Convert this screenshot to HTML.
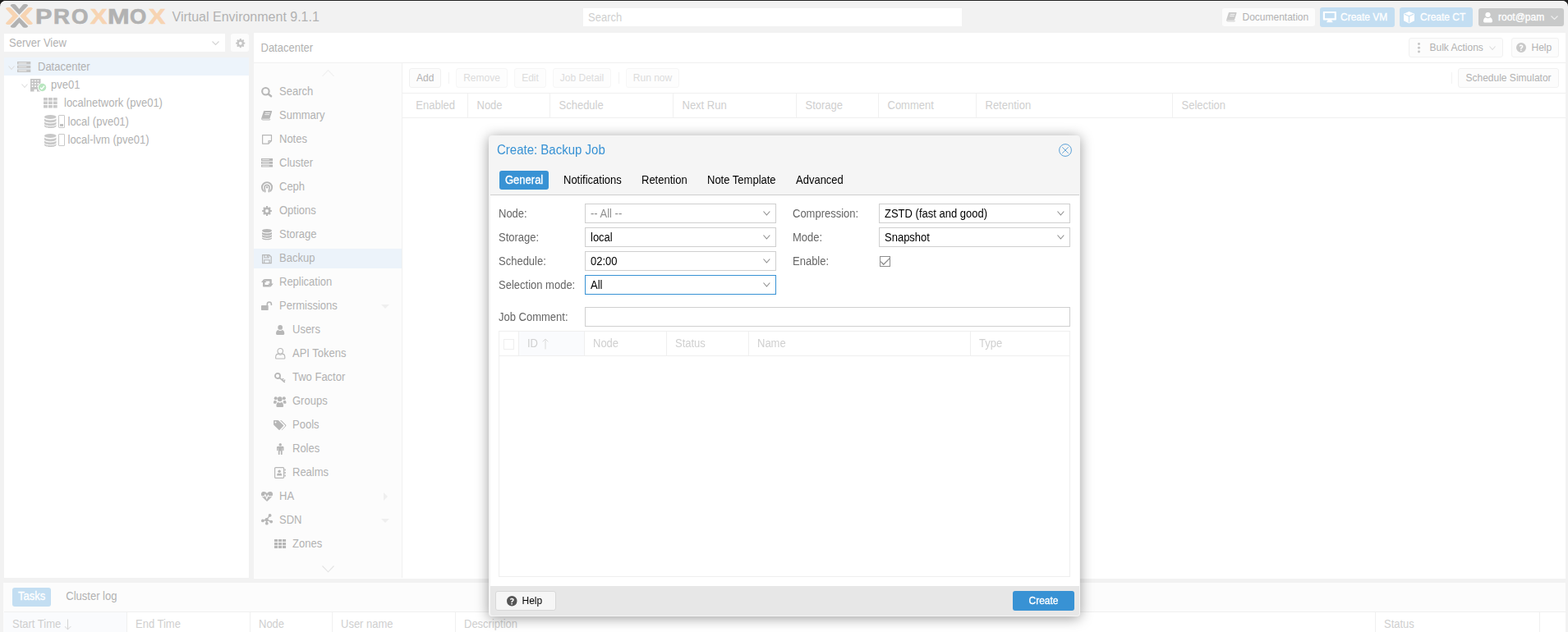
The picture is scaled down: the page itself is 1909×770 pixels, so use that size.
<!DOCTYPE html>
<html lang="en"><head><meta charset="utf-8"><title>pve01 - Proxmox Virtual Environment</title>
<style>
html,body{margin:0;padding:0}
body{width:1909px;height:770px;overflow:hidden;background:#1f1f1f;position:relative;
 font-family:"Liberation Sans",Arial,Helvetica,sans-serif;font-size:13px;line-height:17px;color:#000}
#app{position:absolute;left:0;top:1px;width:1909px;height:769px;background:#f2f2f2;border-radius:7px 7px 0 0;overflow:hidden;box-shadow:inset 0 1px 0 #fff}
#pg{position:absolute;left:0;top:-1px;width:1909px;height:770px}
.b{position:absolute;box-sizing:border-box}
.t{position:absolute;white-space:nowrap;line-height:17px;transform:scaleY(1.065);transform-origin:0 75%}
.ic{position:absolute;display:block;overflow:visible}
.m{color:#b2b2b2}
.h{color:#cfcfcf}
.d{color:#dcdcdc}
.btn{background:#fcfcfc;border:1px solid #f1f1f1;border-radius:3px}
.btnd{background:#fdfdfd;border:1px solid #f6f6f6;border-radius:3px}
.fld{background:#fff;border:1px solid #cfcfcf}
.lbl{color:#666}
.s{font-size:12px}
.w{-webkit-text-stroke:.3px #fff}
</style></head><body><div id="app"><div id="pg">
<svg class="ic" style="left:6px;top:4px;width:36px;height:32px" viewBox="6 4 36 32"><path d="M12.600 6.700Q13.200 5 15 5L17 5Q18.300 5 19.200 6L23.400 11.100L27.600 6Q28.500 5 29.800 5L31.800 5Q33.600 5 34.200 6.700L23.400 17.900Z" fill="#b2b2b2"/><path d="M12.600 32.100Q13.200 33.800 15 33.800L17 33.800Q18.300 33.800 19.200 32.800L23.400 27.700L27.600 32.800Q28.500 33.800 29.800 33.800L31.800 33.800Q33.600 33.800 34.200 32.100L23.400 20.900Z" fill="#b2b2b2"/><path d="M6.900 10.600Q7.200 8.900 9.200 8.900L11.200 8.900Q12.500 8.900 13.500 9.900L22.500 19.400L13.500 28.900Q12.500 29.900 11.200 29.900L9.200 29.900Q7.200 29.900 6.900 28.200L15.200 19.400Z" fill="#f7d4b2"/><path d="M39.900 10.600Q39.600 8.900 37.600 8.900L35.600 8.900Q34.300 8.900 33.300 9.900L24.300 19.400L33.300 28.900Q34.300 29.900 35.600 29.900L37.600 29.900Q39.600 29.900 39.900 28.200L31.600 19.400Z" fill="#f7d4b2"/></svg>
<div class="b" id="wm" style="left:0;top:6.800px;width:260px;height:27px;white-space:nowrap;font-weight:bold;font-size:26.500px;line-height:26.500px;-webkit-text-stroke:.7px currentColor"><span style="display:inline-block;margin-left:43.42px;transform-origin:0 0;transform:scaleX(1.152);color:#b2b2b2">P</span><span style="display:inline-block;margin-left:3.89px;transform-origin:0 0;transform:scaleX(1.045);color:#b2b2b2">R</span><span style="display:inline-block;margin-left:3.07px;transform-origin:0 0;transform:scaleX(0.992);color:#b2b2b2">O</span><span style="display:inline-block;margin-left:1.84px;transform-origin:0 0;transform:scaleX(1.149);color:#f7d4b2">X</span><span style="display:inline-block;margin-left:3.91px;transform-origin:0 0;transform:scaleX(1.206);color:#b2b2b2">M</span><span style="display:inline-block;margin-left:4.90px;transform-origin:0 0;transform:scaleX(0.981);color:#b2b2b2">O</span><span style="display:inline-block;margin-left:1.73px;transform-origin:0 0;transform:scaleX(1.149);color:#f7d4b2">X</span></div>
<div class="t m" style="left:209.5px;top:11px;font-size:16px;line-height:20px">Virtual Environment 9.1.1</div>
<div class="b " style="left:710px;top:10px;width:461px;height:22px;background:#fff"></div>
<div class="t " style="left:716px;top:12.5px;color:#cfcfcf">Search</div>
<div class="b " style="left:1488px;top:10px;width:113px;height:22px;background:#fcfcfc;border-radius:3px"></div>
<svg class="ic" style="left:1492.70px;top:15.20px;width:12.6px;height:11.4px;color:#cbcbcb" viewBox="0 0 13.2 11.5" preserveAspectRatio="none" fill="currentColor"><path d="M3.600 0H12.500Q13.500 0 13.100 1L10.500 9.200Q10.300 9.800 9.500 9.800H1.400Q0 9.800 .4 8.400L3 .6Q3.200 0 3.600 0Z"/><path d="M5 2.500H10.800M4.300 4.600H10.100" stroke="#fff" stroke-opacity=".8" stroke-width="1" fill="none"/><path d="M.4 9.300Q.3 11 2 11H10.600L10.900 10.200" stroke="currentColor" stroke-width="1" fill="none"/></svg>
<div class="t m s" style="left:1512.5px;top:12.5px;">Documentation</div>
<div class="b " style="left:1607px;top:9px;width:91px;height:24px;background:#c3def2;border-radius:3px"></div>
<svg class="ic" style="left:1611.30px;top:13.80px;width:15.7px;height:13.2px;color:#fff" viewBox="0 0 14.6 12.3" preserveAspectRatio="none" fill="currentColor"><path transform="translate(-.7 -1.800)" d="M1.200 1.800h13.600c.4 0 .7.300.7.700v8.300c0 .4-.3.700-.7.700h-4.600l.5 1.600h.6v1h-6.600v-1h.6l.5-1.600h-4.600c-.4 0-.7-.3-.7-.7v-8.300c0-.4.300-.7.700-.700zM2.500 3.600v6h11v-6z" fill-rule="evenodd"/></svg>
<div class="t s w" style="left:1632px;top:12.5px;color:#fff">Create VM</div>
<div class="b " style="left:1704px;top:9px;width:89px;height:24px;background:#c3def2;border-radius:3px"></div>
<svg class="ic" style="left:1709.00px;top:14.00px;width:13px;height:14.4px;color:#fff" viewBox="0 0 13 14.4" preserveAspectRatio="none" fill="currentColor"><path d="M6.500 0L13 2.700V11.300L6.500 14.400L0 11.300V2.700Z"/><path d="M1 3.300L6.500 5.700L12 3.300M6.500 5.700V13.600" fill="none" stroke="#c3def2" stroke-width="1.200"/></svg>
<div class="t s w" style="left:1729px;top:12.5px;color:#fff">Create CT</div>
<div class="b " style="left:1800px;top:10px;width:104px;height:22px;background:#c8c9c9;border-radius:3px"></div>
<svg class="ic" style="left:1805.50px;top:14.50px;width:11px;height:12.5px;color:#fff" viewBox="0 0 10.3 12" preserveAspectRatio="none" fill="currentColor"><circle cx="5.150" cy="2.900" r="2.900"/><path d="M1.300 12Q0 12 0 10.600C0 8 .9 6.200 2.600 6C3.300 6.700 4.200 7 5.150 7C6.100 7 7 6.700 7.700 6C9.400 6.200 10.300 8 10.300 10.600Q10.300 12 9 12Z"/></svg>
<div class="t s w" style="left:1824px;top:12.5px;color:#fff">root@pam</div>
<svg class="ic" style="left:1888px;top:19px;width:9px;height:5px" viewBox="0 0 9 5"><path d="M0.500 0.500L4.5 4.5L8.5 0.500" fill="none" stroke="#eee" stroke-width="1.2"/></svg>
<div class="b " style="left:5px;top:41px;width:269px;height:22px;background:#fff"></div>
<div class="t m" style="left:11px;top:43.5px;">Server View</div>
<svg class="ic" style="left:258px;top:50px;width:9px;height:5px" viewBox="0 0 9 5"><path d="M0.500 0.500L4.5 4.5L8.5 0.500" fill="none" stroke="#d4d4d4" stroke-width="1.1"/></svg>
<div class="b " style="left:281px;top:41px;width:22px;height:22px;background:#fcfcfc;border-radius:3px"></div>
<svg class="ic" style="left:286.50px;top:46.50px;width:11.5px;height:11.5px;color:#c6c6c6" viewBox="0 0 13.4 13.4" preserveAspectRatio="none" fill="currentColor"><path transform="translate(-1.300 -1.300)" d="M8 1.300l1 .1.400 1.700 1 .4 1.500-.9 1.400 1.400-.9 1.500.4 1 1.700.4v2l-1.700.4-.4 1 .9 1.500-1.400 1.400-1.500-.9-1 .4-.4 1.700h-2l-.4-1.700-1-.4-1.500.9-1.400-1.400.9-1.500-.4-1-1.700-.4v-2l1.700-.4.4-1-.9-1.500 1.400-1.400 1.500.9 1-.4.400-1.700zM8 5.800a2.200 2.200 0 100 4.400 2.200 2.200 0 000-4.400z" fill-rule="evenodd"/></svg>
<div class="b " style="left:5px;top:70px;width:298px;height:634px;background:#fff"></div>
<div class="b " style="left:5px;top:70px;width:298px;height:22px;background:#edf4fb"></div>
<div class="t m" style="left:46px;top:72.5px;">Datacenter</div>
<div class="t m" style="left:62px;top:94.75px;">pve01</div>
<div class="t m" style="left:78px;top:116.5px;">localnetwork (pve01)</div>
<div class="t m" style="left:82.5px;top:139.5px;">local (pve01)</div>
<div class="t m" style="left:82.5px;top:162px;">local-lvm (pve01)</div>
<svg class="ic" style="left:10px;top:79.5px;width:8px;height:5px" viewBox="0 0 8 5"><path d="M0.500 0.500L4.0 4.5L7.5 0.500" fill="none" stroke="#dedede" stroke-width="1.1"/></svg>
<svg class="ic" style="left:26px;top:101.5px;width:8px;height:5px" viewBox="0 0 8 5"><path d="M0.500 0.500L4.0 4.5L7.5 0.500" fill="none" stroke="#dedede" stroke-width="1.1"/></svg>
<svg class="ic" style="left:20.60px;top:75.00px;width:16.3px;height:13px;color:#c4c4c4" viewBox="0 0 14.1 10.6" preserveAspectRatio="none" fill="currentColor"><path d="M0 0H14.100V2.900H0ZM0 3.850H14.100V6.750H0ZM0 7.700H14.100V10.600H0Z"/><path d="M1.200 1.450H9.800M1.200 5.300H9.800M1.200 9.150H9.800" stroke="#fff" stroke-opacity=".7" stroke-width="1" fill="none"/></svg>
<svg class="ic" style="left:36.90px;top:96.00px;width:12.5px;height:15.6px;color:#c4c4c4" viewBox="0 0 11 14" preserveAspectRatio="none" fill="currentColor"><path transform="translate(-2 -1)" d="M2 1h11v14h-4v-2.500h-3v2.500h-4zM3.500 2.500v1.500h1.500v-1.500zM6.500 2.500v1.500h1.500v-1.500zM9.500 2.500v1.500h1.500v-1.500zM3.500 5.500v1.500h1.500v-1.500zM6.500 5.500v1.500h1.500v-1.500zM9.500 5.500v1.500h1.500v-1.500zM3.500 8.500v1.500h1.500v-1.500zM6.500 8.500v1.500h1.500v-1.500zM9.500 8.500v1.500h1.500v-1.500z" fill-rule="evenodd"/></svg>
<svg class="ic" style="left:46px;top:101px;width:11px;height:11px" viewBox="0 0 11 11"><circle cx="5.500" cy="5.500" r="5.500" fill="#fff"/><circle cx="5.500" cy="5.500" r="4.700" fill="#b9e6c0"/><path d="M3 5.700l1.800 1.700 3.200-3.600" stroke="#fff" stroke-width="1.400" fill="none"/></svg>
<svg class="ic" style="left:52.50px;top:119.40px;width:16.7px;height:12.5px;color:#c8c8c8" viewBox="0 0 14.1 10.9" preserveAspectRatio="none" fill="currentColor"><path d="M0 0H4.100V3.100H0ZM5 0H9.100V3.100H5ZM10 0H14.100V3.100H10ZM0 3.900H4.100V7H0ZM5 3.900H9.100V7H5ZM10 3.900H14.100V7H10ZM0 7.800H4.100V10.900H0ZM5 7.800H9.100V10.900H5ZM10 7.800H14.100V10.900H10Z"/></svg>
<svg class="ic" style="left:53.60px;top:140.00px;width:14.5px;height:16px;color:#c8c8c8" viewBox="0 0 12 14.4" preserveAspectRatio="none" fill="currentColor"><g transform="translate(-2 -1.300)"><ellipse cx="8" cy="3.600" rx="6" ry="2.300"/><path d="M2 5.400c.7 1.100 3 1.800 6 1.800s5.300-.7 6-1.800v2c0 1.300-2.700 2.300-6 2.300s-6-1-6-2.300zM2 8.900c.7 1.100 3 1.800 6 1.800s5.300-.7 6-1.800v2c0 1.300-2.700 2.300-6 2.300s-6-1-6-2.300zM2 12.400c.7 1.100 3 1.800 6 1.800s5.300-.7 6-1.800v1c0 1.300-2.700 2.300-6 2.300s-6-1-6-2.300z"/></g></svg>
<div class="b " style="left:71.2px;top:140px;width:8px;height:15.6px;border:1px solid #c9c9c9;border-radius:1px;background:#fff"></div>
<div class="b " style="left:73px;top:151.3px;width:4.4px;height:2.7px;background:#c0c0c0"></div>
<svg class="ic" style="left:53.60px;top:163.00px;width:14.5px;height:16px;color:#c8c8c8" viewBox="0 0 12 14.4" preserveAspectRatio="none" fill="currentColor"><g transform="translate(-2 -1.300)"><ellipse cx="8" cy="3.600" rx="6" ry="2.300"/><path d="M2 5.400c.7 1.100 3 1.800 6 1.800s5.300-.7 6-1.800v2c0 1.300-2.700 2.300-6 2.300s-6-1-6-2.300zM2 8.900c.7 1.100 3 1.800 6 1.800s5.300-.7 6-1.800v2c0 1.300-2.700 2.300-6 2.300s-6-1-6-2.300zM2 12.400c.7 1.100 3 1.800 6 1.800s5.300-.7 6-1.800v1c0 1.300-2.700 2.300-6 2.300s-6-1-6-2.300z"/></g></svg>
<div class="b " style="left:71.2px;top:163.2px;width:8px;height:15px;border:1px solid #c9c9c9;border-radius:1px;background:#fff"></div>
<div class="b " style="left:309px;top:40px;width:1597px;height:665px;background:#fff"></div>
<div class="t m" style="left:317.5px;top:50px;">Datacenter</div>
<div class="b " style="left:309px;top:76px;width:1597px;height:1px;background:#f0f0f0"></div>
<div class="b btn" style="left:1715px;top:46px;width:115px;height:24px;"></div>
<svg class="ic" style="left:1725.50px;top:52.00px;width:3px;height:12.5px;color:#c6c6c6" viewBox="0 0 3 13" preserveAspectRatio="none" fill="currentColor"><circle cx="1.500" cy="1.500" r="1.500"/><circle cx="1.500" cy="6.500" r="1.500"/><circle cx="1.500" cy="11.500" r="1.500"/></svg>
<div class="t m s" style="left:1740.5px;top:49.5px;">Bulk Actions</div>
<svg class="ic" style="left:1813px;top:56px;width:8px;height:5px" viewBox="0 0 8 5"><path d="M0.500 0.500L4.0 4.5L7.5 0.500" fill="none" stroke="#dcdcdc" stroke-width="1.1"/></svg>
<div class="b btn" style="left:1840px;top:46px;width:58px;height:24px;"></div>
<svg class="ic" style="left:1845.50px;top:52.00px;width:12px;height:12px;color:#c9c9c9" viewBox="0 0 14 14" preserveAspectRatio="none" fill="currentColor"><path transform="translate(-1 -1)" d="M8 1a7 7 0 100 14A7 7 0 008 1zm-.1 3c1.700 0 2.900 1 2.900 2.400 0 1-.5 1.600-1.300 2.100-.6.400-.8.600-.8 1.100v.3H6.900v-.5c0-.9.400-1.400 1.100-1.800.6-.4.900-.6.900-1.100 0-.5-.4-.8-1-.8s-1.100.3-1.400.8l-1.300-.9c.6-1 1.500-1.600 2.700-1.600zM7.800 10.900a1 1 0 110 2 1 1 0 010-2z" fill-rule="evenodd"/></svg>
<div class="t m s" style="left:1864.5px;top:49.5px;">Help</div>
<div class="b " style="left:309px;top:77px;width:181px;height:627px;background:#fcfcfc;border-right:1px solid #f0f0f0"></div>
<svg class="ic" style="left:392px;top:85px;width:15px;height:8.3px" viewBox="0 0 15 8.3"><path d="M0.500 7.800000000000001L7.5 0.500L14.5 7.800000000000001" fill="none" stroke="#f0f0f0" stroke-width="1.1"/></svg>
<svg class="ic" style="left:392px;top:689px;width:15px;height:8.3px" viewBox="0 0 15 8.3"><path d="M0.500 0.500L7.5 7.800000000000001L14.5 0.500" fill="none" stroke="#e3e3e3" stroke-width="1.1"/></svg>
<div class="b " style="left:309px;top:303px;width:180px;height:24px;background:#ecf3fa"></div>
<svg class="ic" style="left:318.30px;top:105.90px;width:13.3px;height:12.5px;color:#b7b7b7" viewBox="0 0 13.3 12.5" preserveAspectRatio="none" fill="currentColor"><circle cx="5.400" cy="5.300" r="4.250" fill="none" stroke="currentColor" stroke-width="2.100"/><path d="M8.700 8.500L12.100 11.300" stroke="currentColor" stroke-width="2.400" stroke-linecap="round"/></svg>
<div class="t m" style="left:340px;top:103.3px;">Search</div>
<svg class="ic" style="left:318.40px;top:135.20px;width:13.2px;height:11.5px;color:#b7b7b7" viewBox="0 0 13.2 11.5" preserveAspectRatio="none" fill="currentColor"><path d="M3.600 0H12.500Q13.500 0 13.100 1L10.500 9.200Q10.300 9.800 9.500 9.800H1.400Q0 9.800 .4 8.400L3 .6Q3.200 0 3.600 0Z"/><path d="M5 2.500H10.800M4.300 4.600H10.100" stroke="#fff" stroke-opacity=".8" stroke-width="1" fill="none"/><path d="M.4 9.300Q.3 11 2 11H10.600L10.900 10.200" stroke="currentColor" stroke-width="1" fill="none"/></svg>
<div class="t m" style="left:340px;top:132.3px;">Summary</div>
<svg class="ic" style="left:318.70px;top:164.30px;width:12.1px;height:11.7px;color:#b7b7b7" viewBox="0 0 12.1 11.7" preserveAspectRatio="none" fill="currentColor"><path d="M.6 .6H11.500V7.600L8 11.100H.6ZM8 11.100V7.600H11.500" fill="none" stroke="currentColor" stroke-width="1.200" stroke-linejoin="round"/></svg>
<div class="t m" style="left:340px;top:161.3px;">Notes</div>
<svg class="ic" style="left:317.90px;top:193.20px;width:14.1px;height:10.6px;color:#b7b7b7" viewBox="0 0 14.1 10.6" preserveAspectRatio="none" fill="currentColor"><path d="M0 0H14.100V2.900H0ZM0 3.850H14.100V6.750H0ZM0 7.700H14.100V10.600H0Z"/><path d="M1.200 1.450H9.800M1.200 5.300H9.800M1.200 9.150H9.800" stroke="#fff" stroke-opacity=".7" stroke-width="1" fill="none"/></svg>
<div class="t m" style="left:340px;top:190.3px;">Cluster</div>
<svg class="ic" style="left:317.90px;top:221.20px;width:14.1px;height:13.4px;color:#b7b7b7" viewBox="0 0 14.1 13.4" preserveAspectRatio="none" fill="currentColor"><path d="M2.900 11.700A6.100 6.100 0 1 1 11.200 11.700" fill="none" stroke="currentColor" stroke-width="1.900" stroke-linecap="round"/><path d="M4.700 12.600C5.100 10.600 4 9.400 4 7.400A3.050 3.050 0 0 1 10.100 7.400C10.100 9.400 9 10.600 9.400 12.600" fill="none" stroke="currentColor" stroke-width="1.600" stroke-linecap="round"/><circle cx="7.050" cy="7.300" r="1.250"/></svg>
<div class="t m" style="left:340px;top:219.3px;">Ceph</div>
<svg class="ic" style="left:319.10px;top:250.80px;width:12px;height:12.2px;color:#b7b7b7" viewBox="0 0 13.4 13.4" preserveAspectRatio="none" fill="currentColor"><path transform="translate(-1.300 -1.300)" d="M8 1.300l1 .1.400 1.700 1 .4 1.500-.9 1.400 1.400-.9 1.500.4 1 1.700.4v2l-1.700.4-.4 1 .9 1.500-1.400 1.400-1.500-.9-1 .4-.4 1.700h-2l-.4-1.700-1-.4-1.500.9-1.400-1.400.9-1.500-.4-1-1.700-.4v-2l1.700-.4.4-1-.9-1.500 1.400-1.400 1.500.9 1-.4.400-1.700zM8 5.800a2.200 2.200 0 100 4.400 2.200 2.200 0 000-4.400z" fill-rule="evenodd"/></svg>
<div class="t m" style="left:340px;top:248.3px;">Options</div>
<svg class="ic" style="left:319.10px;top:279.30px;width:12px;height:13.3px;color:#b7b7b7" viewBox="0 0 12 14.4" preserveAspectRatio="none" fill="currentColor"><g transform="translate(-2 -1.300)"><ellipse cx="8" cy="3.600" rx="6" ry="2.300"/><path d="M2 5.400c.7 1.100 3 1.800 6 1.800s5.300-.7 6-1.800v2c0 1.300-2.700 2.300-6 2.300s-6-1-6-2.300zM2 8.900c.7 1.100 3 1.800 6 1.800s5.300-.7 6-1.800v2c0 1.300-2.700 2.300-6 2.300s-6-1-6-2.300zM2 12.400c.7 1.100 3 1.800 6 1.800s5.300-.7 6-1.800v1c0 1.300-2.700 2.300-6 2.300s-6-1-6-2.300z"/></g></svg>
<div class="t m" style="left:340px;top:277.3px;">Storage</div>
<svg class="ic" style="left:319.00px;top:309.70px;width:11.8px;height:11.3px;color:#b7b7b7" viewBox="0 0 11.8 11.3" preserveAspectRatio="none" fill="currentColor"><path d="M.6 .6H8.800L11.200 3V10.700H.6Z" fill="none" stroke="currentColor" stroke-width="1.200" stroke-linejoin="round"/><path d="M3 .6V4H8.100V.6M2.700 10.700V6.700H9.100V10.700" fill="none" stroke="currentColor" stroke-width="1.100"/><path d="M5.800 1.200H7.200V3.300H5.800Z"/></svg>
<div class="t m" style="left:340px;top:306.3px;">Backup</div>
<svg class="ic" style="left:317.60px;top:339.80px;width:14.8px;height:9.4px;color:#b7b7b7" viewBox="0 0 14.8 9.4" preserveAspectRatio="none" fill="currentColor"><path d="M3.200 0L6.600 4H4.500V7H9.600L11.400 9.400H2.900Q2 9.400 2 8.500V4H0Z"/><path d="M11.600 9.400L8.200 5.400H10.300V2.400H5.200L3.400 0H11.900Q12.800 0 12.800 .9V5.400H14.800Z"/></svg>
<div class="t m" style="left:340px;top:335.3px;">Replication</div>
<svg class="ic" style="left:318.40px;top:367.10px;width:13.2px;height:10.9px;color:#b7b7b7" viewBox="0 0 13.2 10.9" preserveAspectRatio="none" fill="currentColor"><path d="M.6 5.100H8.100Q8.700 5.100 8.700 5.700V10.300Q8.700 10.900 8.100 10.900H.6Q0 10.900 0 10.300V5.700Q0 5.100 .6 5.100Z"/><path d="M7.300 5.400V3.500A2.550 2.550 0 0 1 12.400 3.500V4.900" fill="none" stroke="currentColor" stroke-width="1.600"/></svg>
<div class="t m" style="left:340px;top:364.3px;">Permissions</div>
<svg class="ic" style="left:335.80px;top:395.90px;width:10.3px;height:12px;color:#b7b7b7" viewBox="0 0 10.3 12" preserveAspectRatio="none" fill="currentColor"><circle cx="5.150" cy="2.900" r="2.900"/><path d="M1.300 12Q0 12 0 10.600C0 8 .9 6.200 2.600 6C3.300 6.700 4.200 7 5.150 7C6.100 7 7 6.700 7.700 6C9.400 6.200 10.300 8 10.300 10.600Q10.300 12 9 12Z"/></svg>
<div class="t m" style="left:356px;top:393.3px;">Users</div>
<svg class="ic" style="left:334.70px;top:424.40px;width:12.5px;height:13.6px;color:#b7b7b7" viewBox="0 0 12.5 13.6" preserveAspectRatio="none" fill="currentColor"><circle cx="6.250" cy="3.800" r="3.250" fill="none" stroke="currentColor" stroke-width="1.100"/><path d="M1.600 13Q.6 13 .6 11.900C.6 9.300 1.600 7.400 3.400 7.100C4.200 7.800 5.200 8.100 6.250 8.100C7.300 8.100 8.300 7.800 9.100 7.100C10.900 7.400 11.900 9.300 11.900 11.900Q11.900 13 10.900 13Z" fill="none" stroke="currentColor" stroke-width="1.100"/></svg>
<div class="t m" style="left:356px;top:422.3px;">API Tokens</div>
<svg class="ic" style="left:333.90px;top:453.70px;width:13.3px;height:12.5px;color:#b7b7b7" viewBox="0 0 13.3 12.5" preserveAspectRatio="none" fill="currentColor"><circle cx="4" cy="4" r="3.050" fill="none" stroke="currentColor" stroke-width="1.800"/><path d="M6.400 6.300L12.300 11.500M9.300 9L10.700 7.500M11.200 10.700L12.600 9.200" stroke="currentColor" stroke-width="1.600" stroke-linecap="round" fill="none"/></svg>
<div class="t m" style="left:356px;top:451.3px;">Two Factor</div>
<svg class="ic" style="left:333.20px;top:481.80px;width:15.5px;height:14px;color:#b7b7b7" viewBox="0 0 15.5 14" preserveAspectRatio="none" fill="currentColor"><circle cx="7.750" cy="4.200" r="2.900"/><path d="M4.600 14Q3.400 14 3.400 12.800C3.400 10.200 4.200 8.200 5.700 7.900C6.300 8.400 7 8.700 7.750 8.700C8.500 8.700 9.200 8.400 9.800 7.900C11.300 8.200 12.100 10.200 12.100 12.800Q12.100 14 10.900 14Z"/><circle cx="2.700" cy="3.300" r="2"/><circle cx="12.800" cy="3.300" r="2"/><path d="M0 8.700C0 7 .6 5.800 1.600 5.700C2.200 6.100 2.800 6.300 3.600 6.200C3.300 7 3.700 7.600 4.200 8C3.500 8.500 3.100 9.100 2.900 9.800H1Q0 9.800 0 8.700ZM15.500 8.700C15.500 7 14.900 5.800 13.900 5.700C13.300 6.100 12.700 6.300 11.900 6.200C12.200 7 11.800 7.600 11.300 8C12 8.500 12.400 9.100 12.600 9.800H14.500Q15.500 9.800 15.500 8.700Z"/></svg>
<div class="t m" style="left:356px;top:480.3px;">Groups</div>
<svg class="ic" style="left:333.20px;top:511.70px;width:15.5px;height:12.5px;color:#b7b7b7" viewBox="0 0 15.5 12.5" preserveAspectRatio="none" fill="currentColor"><path d="M0 .7Q0 0 .7 0H5.200Q5.900 0 6.400 .5L12 6.100Q12.500 6.600 12 7.100L7.500 11.800Q7 12.300 6.500 11.800L.5 6Q0 5.500 0 4.800ZM2.500 1.500A1 1 0 1 0 2.500 3.500A1 1 0 1 0 2.500 1.500Z" fill-rule="evenodd"/><path d="M8 0H8.800Q9.500 0 10 .5L15.200 5.800Q15.700 6.400 15.200 7L10.600 11.800Q10.200 12.200 9.600 12L14 7.200Q14.500 6.600 14 6Z"/></svg>
<div class="t m" style="left:356px;top:509.29999999999995px;">Pools</div>
<svg class="ic" style="left:336.70px;top:539.70px;width:8.5px;height:14.1px;color:#b7b7b7" viewBox="0 0 8.5 14.1" preserveAspectRatio="none" fill="currentColor"><circle cx="4.250" cy="1.700" r="1.700"/><path d="M1.400 3.800H7.100Q8.500 3.800 8.500 5.200V8.600Q8.500 9.300 7.800 9.300Q7.100 9.300 7.100 8.600V6H6.700V13.200Q6.700 14.100 5.800 14.100Q4.900 14.100 4.900 13.200V9.600H3.600V13.200Q3.600 14.100 2.700 14.100Q1.800 14.100 1.800 13.200V6H1.400V8.600Q1.400 9.300 .7 9.300Q0 9.300 0 8.600V5.200Q0 3.800 1.400 3.800Z"/></svg>
<div class="t m" style="left:356px;top:538.3px;">Roles</div>
<svg class="ic" style="left:334.20px;top:568.70px;width:13.8px;height:14px;color:#b7b7b7" viewBox="0 0 13.8 14" preserveAspectRatio="none" fill="currentColor"><rect x=".6" y=".6" width="11" height="12.800" rx="1.100" fill="none" stroke="currentColor" stroke-width="1.200"/><path d="M12.400 2.600H13.800V4.600H12.400ZM12.400 6H13.800V8H12.400ZM12.400 9.400H13.800V11.400H12.400Z"/><circle cx="6.100" cy="5.200" r="1.750"/><path d="M3.100 10.400C3.100 8.700 3.700 7.600 4.700 7.500C5.100 7.800 5.600 8 6.100 8C6.600 8 7.100 7.800 7.500 7.500C8.500 7.600 9.100 8.700 9.100 10.400Z"/></svg>
<div class="t m" style="left:356px;top:567.3px;">Realms</div>
<svg class="ic" style="left:317.90px;top:598.90px;width:14.1px;height:11.9px;color:#b7b7b7" viewBox="0 0 14.1 11.9" preserveAspectRatio="none" fill="currentColor"><path d="M7.050 11.900L1.300 6.400C-1 4-.2 .6 2.600 .1C4.400-.2 6 .7 7.050 2.200C8.100 .7 9.700-.2 11.500 .1C14.300 .6 15.100 4 12.800 6.400Z"/><path d="M0 5.800H3.700L4.900 3.500L6.800 8.400L8.400 4.500L9.200 5.800H14.100" fill="none" stroke="#fcfcfc" stroke-width="1.100"/></svg>
<div class="t m" style="left:340px;top:596.3px;">HA</div>
<svg class="ic" style="left:317.90px;top:625.90px;width:14.1px;height:13.6px;color:#b7b7b7" viewBox="0 0 14.1 13.6" preserveAspectRatio="none" fill="currentColor"><path d="M1.800 8.400L6.600 7.200L10.600 1.800M6.600 7.200L12.400 9.600M6.600 7.200L6.800 11.900" stroke="currentColor" stroke-width="1.300" fill="none"/><circle cx="6.600" cy="7.200" r="2.200"/><circle cx="10.600" cy="1.900" r="1.900"/><circle cx="1.900" cy="8.400" r="1.900"/><circle cx="12.200" cy="9.600" r="1.900"/><circle cx="6.800" cy="11.700" r="1.900"/></svg>
<div class="t m" style="left:340px;top:625.3px;">SDN</div>
<svg class="ic" style="left:333.90px;top:657.10px;width:14.1px;height:10.9px;color:#b7b7b7" viewBox="0 0 14.1 10.9" preserveAspectRatio="none" fill="currentColor"><path d="M0 0H4.100V3.100H0ZM5 0H9.100V3.100H5ZM10 0H14.100V3.100H10ZM0 3.900H4.100V7H0ZM5 3.900H9.100V7H5ZM10 3.900H14.100V7H10ZM0 7.800H4.100V10.900H0ZM5 7.800H9.100V10.900H5ZM10 7.800H14.100V10.900H10Z"/></svg>
<div class="t m" style="left:356px;top:654.3px;">Zones</div>
<svg class="ic" style="left:464px;top:370.5px;width:10px;height:5px" viewBox="0 0 10 5"><path d="M0 0h10l-5 5z" fill="#efefef"/></svg>
<svg class="ic" style="left:467px;top:599.5px;width:5px;height:10px" viewBox="0 0 5 10"><path d="M0 0v10l5-5z" fill="#efefef"/></svg>
<svg class="ic" style="left:464px;top:631.5px;width:10px;height:5px" viewBox="0 0 10 5"><path d="M0 0h10l-5 5z" fill="#efefef"/></svg>
<div class="b btn" style="left:498px;top:83px;width:39px;height:24px;"></div>
<div class="t m s" style="left:507px;top:86.5px;">Add</div>
<div class="b " style="left:546px;top:88px;width:1px;height:14px;background:#f3f3f3"></div>
<div class="b btnd" style="left:555px;top:83px;width:63px;height:24px;"></div>
<div class="t d s" style="left:555px;top:86.500px;width:63px;text-align:center">Remove</div>
<div class="b btnd" style="left:626px;top:83px;width:39px;height:24px;"></div>
<div class="t d s" style="left:626px;top:86.500px;width:39px;text-align:center">Edit</div>
<div class="b btnd" style="left:673px;top:83px;width:71px;height:24px;"></div>
<div class="t d s" style="left:673px;top:86.500px;width:71px;text-align:center">Job Detail</div>
<div class="b btnd" style="left:762px;top:83px;width:65px;height:24px;"></div>
<div class="t d s" style="left:762px;top:86.500px;width:65px;text-align:center">Run now</div>
<div class="b " style="left:753px;top:88px;width:1px;height:14px;background:#f3f3f3"></div>
<div class="b " style="left:1767px;top:88px;width:1px;height:14px;background:#f3f3f3"></div>
<div class="b btn" style="left:1775px;top:83px;width:122.5px;height:24px;"></div>
<div class="t m s" style="left:1784.5px;top:86.5px;">Schedule Simulator</div>
<div class="b " style="left:490px;top:113px;width:1416px;height:1px;background:#f0f0f0"></div>
<div class="b " style="left:490px;top:143px;width:1416px;height:1px;background:#f0f0f0"></div>
<div class="t h" style="left:506.3px;top:120px;">Enabled</div>
<div class="t h" style="left:580.5px;top:120px;">Node</div>
<div class="b " style="left:569px;top:114px;width:1px;height:29px;background:#f0f0f0"></div>
<div class="t h" style="left:680.5px;top:120px;">Schedule</div>
<div class="b " style="left:669px;top:114px;width:1px;height:29px;background:#f0f0f0"></div>
<div class="t h" style="left:830.5px;top:120px;">Next Run</div>
<div class="b " style="left:819px;top:114px;width:1px;height:29px;background:#f0f0f0"></div>
<div class="t h" style="left:980.5px;top:120px;">Storage</div>
<div class="b " style="left:969px;top:114px;width:1px;height:29px;background:#f0f0f0"></div>
<div class="t h" style="left:1080.5px;top:120px;">Comment</div>
<div class="b " style="left:1069px;top:114px;width:1px;height:29px;background:#f0f0f0"></div>
<div class="t h" style="left:1199.5px;top:120px;">Retention</div>
<div class="b " style="left:1188px;top:114px;width:1px;height:29px;background:#f0f0f0"></div>
<div class="t h" style="left:1438.5px;top:120px;">Selection</div>
<div class="b " style="left:1427px;top:114px;width:1px;height:29px;background:#f0f0f0"></div>
<div class="b " style="left:4px;top:710px;width:1902px;height:60px;background:#fcfcfc"></div>
<div class="b " style="left:15px;top:716px;width:47px;height:23px;background:#c3def2;border-radius:3px"></div>
<div class="t w" style="left:22px;top:718.3px;color:#fff">Tasks</div>
<div class="t m" style="left:80.3px;top:718.3px;">Cluster log</div>
<div class="b " style="left:5px;top:745px;width:1901px;height:25px;background:#fff;border-top:1px solid #f0f0f0"></div>
<div class="b " style="left:5px;top:746px;width:150px;height:24px;background:#fafbfd"></div>
<div class="t h" style="left:15px;top:751.5px;">Start Time</div>
<div class="t h" style="left:165px;top:751.5px;">End Time</div>
<div class="b " style="left:154px;top:746px;width:1px;height:24px;background:#f0f0f0"></div>
<div class="t h" style="left:315px;top:751.5px;">Node</div>
<div class="b " style="left:304px;top:746px;width:1px;height:24px;background:#f0f0f0"></div>
<div class="t h" style="left:415px;top:751.5px;">User name</div>
<div class="b " style="left:404px;top:746px;width:1px;height:24px;background:#f0f0f0"></div>
<div class="t h" style="left:565px;top:751.5px;">Description</div>
<div class="b " style="left:554px;top:746px;width:1px;height:24px;background:#f0f0f0"></div>
<div class="t h" style="left:1685px;top:751.5px;">Status</div>
<div class="b " style="left:1674px;top:746px;width:1px;height:24px;background:#f0f0f0"></div>
<div class="b " style="left:1874px;top:746px;width:1px;height:24px;background:#f0f0f0"></div>
<svg class="ic" style="left:78px;top:753.700px;width:9px;height:13.600px" viewBox="0 0 9 13.600"><path d="M4.500 0.500v12.400M0.700 9.100l3.800 3.800 3.800-3.800" fill="none" stroke="#d4d4d4" stroke-width="1"/></svg>
<div id="winlayer" style="position:absolute;left:0;top:0;width:1909px;height:770px;will-change:transform">
<div class="b" id="win" style="left:595px;top:165px;width:720.200px;height:586px;background:#f5f5f5;border-radius:4px;box-shadow:0 2px 16px rgba(0,0,0,.40)"></div>
<div class="t " style="left:605px;top:173px;font-size:15px;line-height:19px;color:#3892d4">Create: Backup Job</div>
<svg class="ic" style="left:1289px;top:175px;width:16px;height:16px" viewBox="0 0 16 16"><circle cx="8" cy="8" r="7.400" fill="none" stroke="#4a96d2" stroke-width="0.900"/><path d="M4.200 4.200l7.600 7.600M11.800 4.200l-7.600 7.600" stroke="#4a96d2" stroke-width="0.800" fill="none"/></svg>
<div class="b " style="left:608px;top:208px;width:60px;height:23px;background:#3892d4;border-radius:3px"></div>
<div class="t w" style="left:615px;top:211px;color:#fff">General</div>
<div class="t " style="left:686px;top:211px;">Notifications</div>
<div class="t " style="left:781px;top:211px;">Retention</div>
<div class="t " style="left:861px;top:211px;">Note Template</div>
<div class="t " style="left:969px;top:211px;">Advanced</div>
<div class="b " style="left:596.5px;top:237px;width:717.2px;height:1px;background:#cfcfcf"></div>
<div class="b " style="left:596.5px;top:238px;width:717.2px;height:476px;background:#fff"></div>
<div class="t lbl" style="left:607px;top:251.8px;">Node:</div>
<div class="b fld" style="left:712px;top:248px;width:233px;height:24px;"></div>
<div class="t " style="left:719px;top:251.8px;color:#8f8f8f">-- All --</div>
<svg class="ic" style="left:928.7px;top:257px;width:8.8px;height:5.5px" viewBox="0 0 8.8 5.5"><path d="M0.500 0.500L4.4 5.0L8.3 0.500" fill="none" stroke="#8c8c8c" stroke-width="1.1"/></svg>
<div class="t lbl" style="left:607px;top:280.8px;">Storage:</div>
<div class="b fld" style="left:712px;top:277px;width:233px;height:24px;"></div>
<div class="t " style="left:719px;top:280.8px;color:#000">local</div>
<svg class="ic" style="left:928.7px;top:286px;width:8.8px;height:5.5px" viewBox="0 0 8.8 5.5"><path d="M0.500 0.500L4.4 5.0L8.3 0.500" fill="none" stroke="#8c8c8c" stroke-width="1.1"/></svg>
<div class="t lbl" style="left:607px;top:309.8px;">Schedule:</div>
<div class="b fld" style="left:712px;top:306px;width:233px;height:24px;"></div>
<div class="t " style="left:719px;top:309.8px;color:#000">02:00</div>
<svg class="ic" style="left:928.7px;top:315px;width:8.8px;height:5.5px" viewBox="0 0 8.8 5.5"><path d="M0.500 0.500L4.4 5.0L8.3 0.500" fill="none" stroke="#8c8c8c" stroke-width="1.1"/></svg>
<div class="t lbl" style="left:607px;top:338.8px;">Selection mode:</div>
<div class="b fld" style="left:712px;top:335px;width:233px;height:24px;border-color:#3892d4;"></div>
<div class="t " style="left:719px;top:338.8px;color:#000">All</div>
<svg class="ic" style="left:928.7px;top:344px;width:8.8px;height:5.5px" viewBox="0 0 8.8 5.5"><path d="M0.500 0.500L4.4 5.0L8.3 0.500" fill="none" stroke="#8c8c8c" stroke-width="1.1"/></svg>
<div class="t lbl" style="left:965px;top:251.8px;">Compression:</div>
<div class="b fld" style="left:1070px;top:248px;width:233px;height:24px;"></div>
<div class="t " style="left:1077px;top:251.8px;color:#000">ZSTD (fast and good)</div>
<svg class="ic" style="left:1286.7px;top:257px;width:8.8px;height:5.5px" viewBox="0 0 8.8 5.5"><path d="M0.500 0.500L4.4 5.0L8.3 0.500" fill="none" stroke="#8c8c8c" stroke-width="1.1"/></svg>
<div class="t lbl" style="left:965px;top:280.8px;">Mode:</div>
<div class="b fld" style="left:1070px;top:277px;width:233px;height:24px;"></div>
<div class="t " style="left:1077px;top:280.8px;color:#000">Snapshot</div>
<svg class="ic" style="left:1286.7px;top:286px;width:8.8px;height:5.5px" viewBox="0 0 8.8 5.5"><path d="M0.500 0.500L4.4 5.0L8.3 0.500" fill="none" stroke="#8c8c8c" stroke-width="1.1"/></svg>
<div class="t lbl" style="left:965px;top:309.8px;">Enable:</div>
<div class="b " style="left:1071px;top:312px;width:13px;height:13px;border:1px solid #8e8e8e;background:#fff"></div>
<svg class="ic" style="left:1072px;top:313px;width:11px;height:11px" viewBox="0 0 11 11"><path d="M0.300 5.600L3.700 9.300L11.300 1.600" fill="none" stroke="#8a8a8a" stroke-width="1.300"/></svg>
<div class="t lbl" style="left:607px;top:377.8px;">Job Comment:</div>
<div class="b fld" style="left:712px;top:374px;width:591px;height:24px;"></div>
<div class="b " style="left:607px;top:403px;width:696px;height:300px;border:1px solid #efefef;background:#fff"></div>
<div class="b " style="left:608px;top:433px;width:694px;height:1px;background:#efefef"></div>
<div class="b " style="left:632px;top:404px;width:80px;height:29px;background:#fafbfd"></div>
<div class="b " style="left:613px;top:413px;width:13px;height:13px;border:1px solid #efefef;background:#fff"></div>
<div class="t " style="left:642px;top:410px;color:#d0d0d0">ID</div>
<div class="b " style="left:631px;top:404px;width:1px;height:29px;background:#efefef"></div>
<div class="t " style="left:722px;top:410px;color:#d0d0d0">Node</div>
<div class="b " style="left:711px;top:404px;width:1px;height:29px;background:#efefef"></div>
<div class="t " style="left:822px;top:410px;color:#d0d0d0">Status</div>
<div class="b " style="left:811px;top:404px;width:1px;height:29px;background:#efefef"></div>
<div class="t " style="left:922px;top:410px;color:#d0d0d0">Name</div>
<div class="b " style="left:911px;top:404px;width:1px;height:29px;background:#efefef"></div>
<div class="t " style="left:1192px;top:410px;color:#d0d0d0">Type</div>
<div class="b " style="left:1181px;top:404px;width:1px;height:29px;background:#efefef"></div>
<svg class="ic" style="left:659.500px;top:411.500px;width:8px;height:14px" viewBox="0 0 8 14"><path d="M4 13.500v-12.500M0.700 4.300l3.300-3.300 3.300 3.300" fill="none" stroke="#dadada" stroke-width="1"/></svg>
<div class="b " style="left:596.5px;top:714px;width:717.2px;height:35.8px;background:#e7e7e7;border-radius:0 0 3px 3px"></div>
<div class="b " style="left:603px;top:720px;width:74px;height:24px;background:#f6f6f6;border:1px solid #d8d8d8;border-radius:3px"></div>
<svg class="ic" style="left:616.50px;top:726.00px;width:12.5px;height:12.5px;color:#555" viewBox="0 0 14 14" preserveAspectRatio="none" fill="currentColor"><path transform="translate(-1 -1)" d="M8 1a7 7 0 100 14A7 7 0 008 1zm-.1 3c1.700 0 2.900 1 2.900 2.400 0 1-.5 1.600-1.300 2.100-.6.400-.8.600-.8 1.100v.3H6.900v-.5c0-.9.400-1.400 1.100-1.800.6-.4.900-.6.900-1.100 0-.5-.4-.8-1-.8s-1.100.3-1.400.8l-1.300-.9c.6-1 1.500-1.600 2.700-1.600zM7.800 10.900a1 1 0 110 2 1 1 0 010-2z" fill-rule="evenodd"/></svg>
<div class="t s" style="left:635.5px;top:723.5px;">Help</div>
<div class="b " style="left:1233px;top:720px;width:75px;height:24px;background:#3892d4;border-radius:3px"></div>
<div class="t s w" style="left:1252.5px;top:723.5px;color:#fff">Create</div>
</div>
</div></div>
</body></html>
